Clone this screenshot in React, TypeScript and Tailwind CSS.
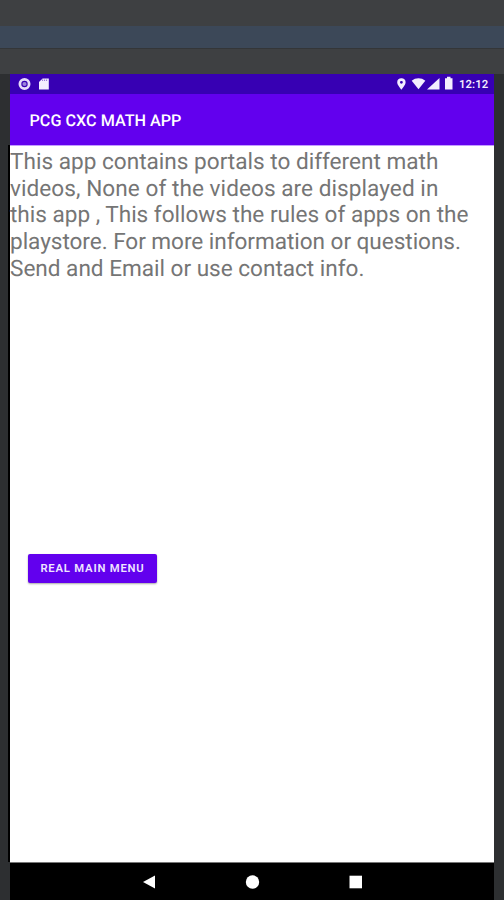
import React from "react";

const lines = [
  { text: "This app contains portals to different math", tracking: "" },
  { text: "videos, None of the videos are displayed in", tracking: "tracking-[0.05px]" },
  { text: "this app , This follows the rules of apps on the", tracking: "tracking-[-0.02px]" },
  { text: "playstore. For more information or questions.", tracking: "tracking-[-0.05px]" },
  { text: "Send and Email or use contact info.", tracking: "tracking-[-0.02px]" },
];

function StatusBar() {
  return (
    <div className="flex h-[20px] shrink-0 items-center justify-between bg-[#3700b3] pl-[8px] pr-[5px] text-[#f3edff]">
      <svg width="34" height="20" viewBox="0 0 34 20" fill="currentColor">
        <circle cx="6.5" cy="10" r="4.6" fill="none" stroke="#e6dcfa" strokeWidth="2.8" />
        <circle cx="6.5" cy="10" r="2.1" fill="#9b83da" />
        <path d="M24.6 4.5h6.2v11H21V8z" />
        <path d="M24.6 5.5v1.500M26.6 5.5v1.500M28.6 5.5v1.500" stroke="#7953ca" strokeWidth="0.8" />
      </svg>
      <div className="flex items-center">
        <svg width="58" height="20" viewBox="0 0 58 20" fill="currentColor">
          <path
            fillRule="evenodd"
            d="M6.4 4.2A4 4 0 0 0 2.2 8.300c0 2.900 4.200 7.400 4.200 7.400s4.200-4.500 4.200-7.400A4 4 0 0 0 6.400 4.200zM6.400 6.900a1.400 1.400 0 1 1 0 2.900a1.400 1.400 0 0 1 0-2.900z"
          />
          <path d="M16.700 6.800C20.500 3.500 26.500 3.500 30.300 6.800L23.500 15.300z" />
          <path d="M44.500 4v11.500H32z" />
          <path d="M50 4.200h2V2.800h3.500v1.400h2v11.300H50z" />
        </svg>
        <span className="ml-[6px] mt-[1px] w-[30px] whitespace-nowrap text-[11.3px] font-semibold leading-[20px] tracking-[0.1px]">
          12:12
        </span>
      </div>
    </div>
  );
}

function NavBar() {
  return (
    <div className="flex h-[38px] shrink-0 items-center justify-center border-t border-[#777] bg-black pl-[1px]">
      <svg width="222" height="16" viewBox="0 0 222 16" fill="#fff">
        <path d="M1 8L13 1.400V14.600z" />
        <circle cx="110.500" cy="8" r="6.700" />
        <path d="M207.500 1.700h12.500v12.600h-12.500z" />
      </svg>
    </div>
  );
}

export default function App() {
  return (
    <div className="flex h-[900px] w-[504px] flex-col overflow-hidden bg-[#3e4042] font-['Roboto',sans-serif] [text-rendering:geometricPrecision]">
      <div className="h-[26px] shrink-0" />
      <div className="h-[22px] shrink-0 bg-[#3c4858]" />
      <div className="h-[26px] shrink-0 border-t border-[#343638]" />
      <div className="flex min-h-0 flex-1 bg-[#2d2f31]">
        <div className="flex w-[10px] shrink-0 flex-col items-end">
          <div className="mt-[71px] w-[2px] flex-1 bg-black" />
          <div className="h-[38px]" />
        </div>
        <div className="flex w-[484px] flex-col">
          <StatusBar />
          <header className="flex h-[51px] shrink-0 items-center bg-[#6200ee] pl-[19.500px] text-white">
            <h1 className="mt-[3px] whitespace-nowrap text-[16.200px] font-medium">PCG CXC MATH APP</h1>
          </header>
          <main className="flex flex-1 flex-col items-start border-t border-[#c39cff] bg-white">
            <p className="mt-[3px] h-[133px] whitespace-nowrap text-[22.600px] leading-[26.700px] text-[#757575]">
              {lines.map((line) => (
                <span key={line.text} className={`block ${line.tracking}`}>
                  {line.text}
                </span>
              ))}
            </p>
            <button className="ml-[18px] mt-[272px] flex h-[29px] w-[129px] items-center justify-center whitespace-nowrap rounded-[2px] bg-[#6200ee] pt-[1px] text-[11.300px] font-semibold tracking-[0.780px] text-[#efe5ff] shadow-[0_1px_2px_rgba(0,0,0,0.35)]">
              REAL MAIN MENU
            </button>
          </main>
          <NavBar />
        </div>
      </div>
    </div>
  );
}
